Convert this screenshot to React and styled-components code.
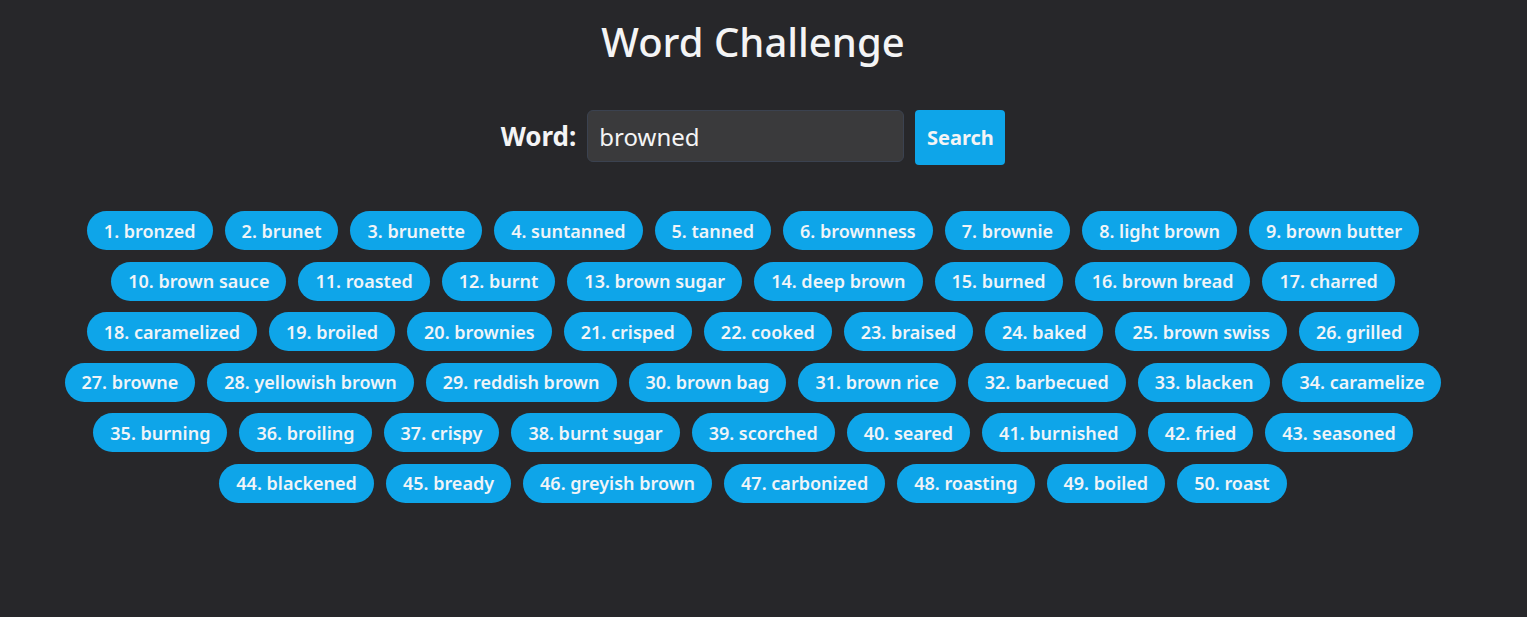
import React from "react";
import styled, { createGlobalStyle } from "styled-components";

const words = ["bronzed","brunet","brunette","suntanned","tanned","brownness","brownie","light brown","brown butter","brown sauce","roasted","burnt","brown sugar","deep brown","burned","brown bread","charred","caramelized","broiled","brownies","crisped","cooked","braised","baked","brown swiss","grilled","browne","yellowish brown","reddish brown","brown bag","brown rice","barbecued","blacken","caramelize","burning","broiling","crispy","burnt sugar","scorched","seared","burnished","fried","seasoned","blackened","bready","greyish brown","carbonized","roasting","boiled","roast"];

const Global = createGlobalStyle`
  html, body { margin: 0; padding: 0; background: #27272a; }
  body { font-family: "Noto Sans", "Open Sans", sans-serif; color: #f4f4f5; }
`;

const Page = styled.main`
  min-height: 617px;
  box-sizing: border-box;
  padding: 17px 21px 0 0;
  display: flex;
  flex-direction: column;
  align-items: center;
`;

const Title = styled.h1`
  margin: 0;
  font-size: 40px;
  line-height: 50px;
  font-weight: 500;
  letter-spacing: 0;
`;

const SearchRow = styled.form`
  margin-top: 43px;
  display: flex;
  align-items: flex-start;
  gap: 11px;
`;

const Label = styled.label`
  font-size: 26px;
  line-height: 52px;
  font-weight: 700;
`;

const Input = styled.input`
  width: 317px;
  height: 52px;
  box-sizing: border-box;
  padding: 0 11px;
  background: #3a3a3c;
  border: 1px solid #3b4250;
  border-radius: 6px;
  color: #f4f4f5;
  font-family: inherit;
  font-size: 24px;
  outline: none;
`;

const Button = styled.button`
  height: 55px;
  width: 90px;
  padding: 0;
  background: #0ea5e9;
  border: none;
  border-radius: 4px;
  color: #f4f4f5;
  font-family: inherit;
  font-size: 20px;
  font-weight: 700;
`;

const Pills = styled.ul`
  list-style: none;
  margin: 46px 0 0;
  padding: 0;
  width: 1420px;
  display: flex;
  flex-wrap: wrap;
  justify-content: center;
  gap: 11.6px 12px;
`;

const Pill = styled.li`
  height: 39px;
  display: flex;
  align-items: center;
  padding: 0 17px;
  background: #0ea5e9;
  border-radius: 20px;
  color: #f0f4f8;
  font-size: 18px;
  font-weight: 600;
  white-space: nowrap;
`;

export default function App() {
  return (
    <>
      <Global />
      <Page>
        <Title>Word Challenge</Title>
        <SearchRow onSubmit={(e) => e.preventDefault()}>
          <Label htmlFor="w">Word:</Label>
          <Input id="w" defaultValue="browned" />
          <Button type="submit">Search</Button>
        </SearchRow>
        <Pills>
          {words.map((w, i) => (
            <Pill key={w}>{`${i + 1}. ${w}`}</Pill>
          ))}
        </Pills>
      </Page>
    </>
  );
}
